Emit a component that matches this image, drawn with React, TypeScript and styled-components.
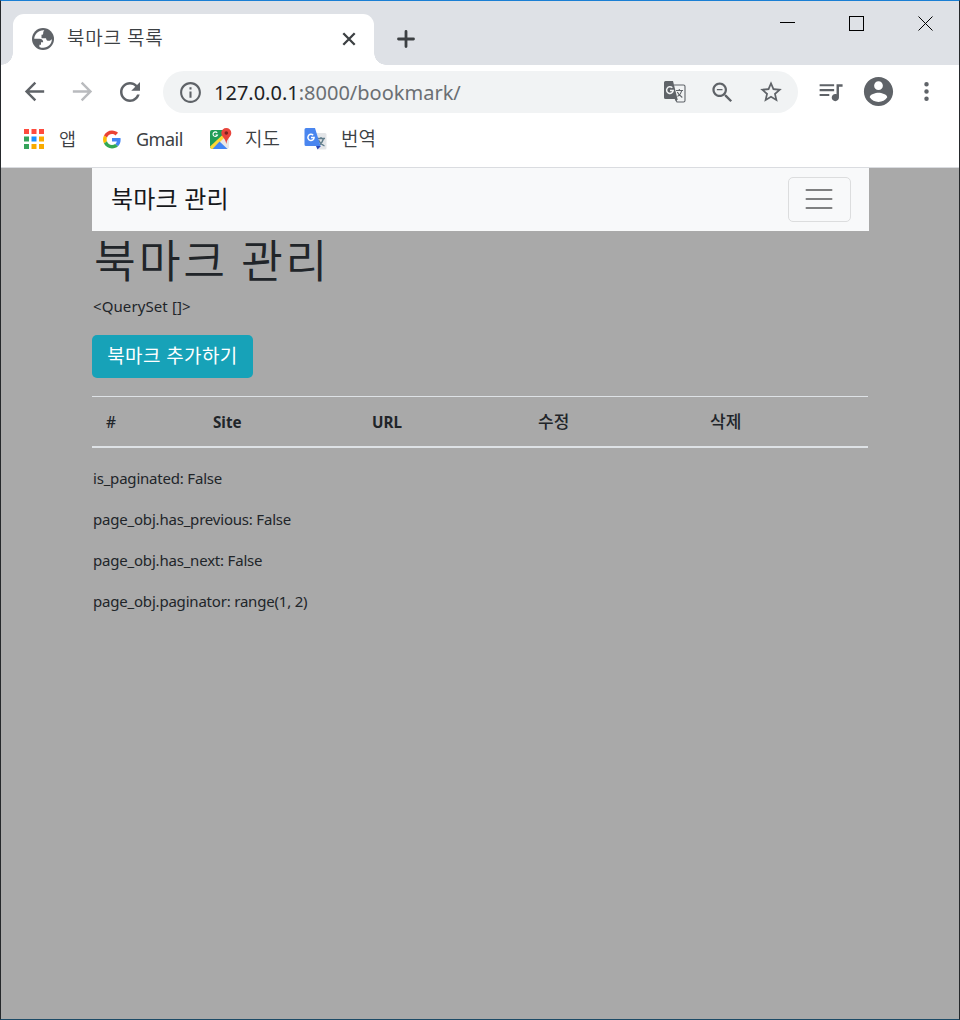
import React from 'react';
import styled, { createGlobalStyle } from 'styled-components';

const Global = createGlobalStyle`
  * { box-sizing: border-box; }
  body { margin: 0; font-family: "Noto Sans", "Noto Sans CJK KR", sans-serif; color: #212529; }
  button { font: inherit; }
`;

const Window = styled.div`
  width: 960px;
  height: 1020px;
  display: flex;
  flex-direction: column;
  border: 1px solid #25282b;
  border-top-color: #1a7fd4;
  border-bottom-color: #1c4a66;
  background: #a9a9a9;
  overflow: hidden;
`;

const TabStrip = styled.div`
  height: 64px;
  flex: none;
  display: flex;
  align-items: flex-end;
  background: #dee1e6;
`;

const TabEdge = styled.div<{ $side: 'left' | 'right' }>`
  width: 12px;
  height: 12px;
  background: radial-gradient(circle at ${p => (p.$side === 'left' ? '0 0' : '100% 0')}, #dee1e6 11.5px, #fff 12px);
`;

const Tab = styled.div`
  width: 361px;
  height: 51px;
  padding: 0 16px 2px 19px;
  display: flex;
  align-items: center;
  background: #fff;
  border-radius: 11px 11px 0 0;
`;

const Text = styled.span<{ $size: number; $gap?: number; $color?: string; $weight?: number }>`
  font-size: ${p => p.$size}px;
  letter-spacing: ${p => p.$gap ?? 0}px;
  color: ${p => p.$color ?? '#3c4043'};
  font-weight: ${p => p.$weight ?? 400};
  line-height: 28px;
  white-space: pre;
`;

const TabTitle = styled(Text)`
  flex: 1;
  margin-left: 13px;
  padding-bottom: 4px;
  font-family: "Noto Sans CJK KR", sans-serif;
`;

const NewTab = styled.div`
  width: 40px;
  height: 51px;
  padding-bottom: 2px;
  display: flex;
  align-items: center;
  justify-content: center;
`;

const Captions = styled.div`
  margin-left: auto;
  margin-right: -1px;
  align-self: flex-start;
  display: flex;
  height: 45px;
`;

const Caption = styled.div`
  width: 69px;
  display: flex;
  align-items: center;
  justify-content: center;
`;

const Toolbar = styled.div`
  height: 53px;
  flex: none;
  display: flex;
  align-items: center;
  padding-left: 9px;
  background: #fff;
`;

const ToolButton = styled.div`
  width: 48px;
  height: 48px;
  flex: none;
  display: flex;
  align-items: center;
  justify-content: center;
`;

const AddressBar = styled.div`
  width: 635px;
  height: 42px;
  margin: 1px 8px 0 9px;
  padding-left: 3px;
  padding-right: 3.5px;
  display: flex;
  align-items: center;
  background: #f1f3f4;
  border-radius: 21px;
`;

const Address = styled.div`
  flex: 1;
  display: flex;
  padding-top: 2px;
`;

const Bookmarks = styled.div`
  height: 50px;
  flex: none;
  display: flex;
  align-items: flex-start;
  padding: 6px 0 0 23px;
  background: #fff;
  border-bottom: 1px solid #dadce0;
`;

const Bookmark = styled.div<{ $width: number; $gap: number }>`
  width: ${p => p.$width}px;
  height: 30px;
  display: flex;
  align-items: center;
  gap: ${p => p.$gap}px;
`;

const Page = styled.main`
  width: 777px;
  margin-left: 91px;
`;

const Navbar = styled.nav`
  height: 63px;
  padding: 0 18px 0 19px;
  display: flex;
  align-items: center;
  justify-content: space-between;
  background: #f8f9fa;
`;

const Brand = styled(Text)`
  padding-bottom: 2px;
`;

const Toggler = styled.button`
  width: 63px;
  height: 45px;
  padding: 0 2px 1px 0;
  display: flex;
  align-items: center;
  justify-content: center;
  background: none;
  border: 1px solid #dcddde;
  border-radius: 5px;
`;

const Title = styled.h1`
  height: 63px;
  margin: 0;
  padding-left: 2px;
  font: 350 45.5px/54px "Noto Sans CJK KR", sans-serif;
  letter-spacing: 2.8px;
  white-space: nowrap;
`;

const Line = styled.p<{ $gap?: number }>`
  height: 25px;
  margin: 0 0 16px 1px;
  font-size: 15px;
  line-height: 25px;
  letter-spacing: ${p => p.$gap ?? -0.2}px;
`;

const AddButton = styled.button`
  width: 161px;
  height: 43px;
  margin: 0 0 18px;
  padding: 0 0 2px;
  display: block;
  color: #fff;
  background: #17a2b8;
  border: 0;
  border-radius: 5px;
  font-size: 19px;
  line-height: 28px;
  letter-spacing: 0.4px;
  white-space: nowrap;
`;

const Table = styled.table`
  width: 776px;
  height: 52px;
  margin-bottom: 18px;
  table-layout: fixed;
  border-spacing: 0;
  border-top: 1px solid #dee2e6;
  border-bottom: 2px solid #dee2e6;
`;

const Head = styled.th<{ $width: number; $weight: number; $size: number }>`
  width: ${p => p.$width}px;
  padding: 0 0 0 14px;
  text-align: left;
  font-size: ${p => p.$size}px;
  line-height: 24px;
  font-weight: ${p => p.$weight};
`;

interface GlyphProps { d: string; size: number; color?: string }
const Glyph = ({ d, size, color = '#5f6368' }: GlyphProps) => (
  <svg width={size} height={size} viewBox="0 0 24 24" fill={color}><path d={d} /></svg>
);

const icons = {
  back: 'M20 11H7.83l5.59-5.59L12 4l-8 8 8 8 1.41-1.41L7.83 13H20v-2z',
  forward: 'M12 4l-1.41 1.41L16.17 11H4v2h12.17l-5.58 5.59L12 20l8-8z',
  reload: 'M17.65 6.35C16.2 4.9 14.21 4 12 4c-4.42 0-7.99 3.58-7.99 8s3.57 8 7.99 8c3.73 0 6.84-2.55 7.73-6h-2.08c-.82 2.33-3.04 4-5.65 4-3.31 0-6-2.69-6-6s2.69-6 6-6c1.66 0 3.14.69 4.22 1.78L13 11h7V4l-2.35 2.35z',
  info: 'M11 7h2v2h-2zm0 4h2v6h-2zm1-9C6.48 2 2 6.48 2 12s4.48 10 10 10 10-4.48 10-10S17.52 2 12 2zm0 18c-4.41 0-8-3.59-8-8s3.59-8 8-8 8 3.59 8 8-3.59 8-8 8z',
  zoomOut: 'M15.5 14h-.79l-.28-.27C15.41 12.59 16 11.11 16 9.5 16 5.91 13.09 3 9.5 3S3 5.91 3 9.5 5.91 16 9.5 16c1.61 0 3.09-.59 4.23-1.57l.27.28v.79l5 4.99L20.49 19l-4.99-5zm-6 0C7.01 14 5 11.99 5 9.5S7.01 5 9.5 5 14 7.01 14 9.5 11.99 14 9.5 14zM7 8.9h5v1.200H7z',
  star: 'M22 9.24l-7.19-.62L12 2 9.19 8.63 2 9.24l5.46 4.73L5.82 21 12 17.27 18.18 21l-1.63-7.03L22 9.24zM12 15.4l-3.76 2.27 1-4.28-3.32-2.88 4.38-.38L12 6.1l1.71 4.04 4.38.38-3.32 2.88 1 4.28L12 15.4z',
  queue: 'M15 6H3v1.7h12V6zm0 4H3v1.7h12V10zM3 15.7h8V14H3v1.7zM17 6v8.18c-.31-.11-.65-.18-1-.18-1.66 0-3 1.34-3 3s1.34 3 3 3 3-1.34 3-3V8h3V6h-5z',
  account: 'M12 2C6.48 2 2 6.48 2 12s4.48 10 10 10 10-4.48 10-10S17.52 2 12 2zm0 3c1.66 0 3 1.34 3 3s-1.34 3-3 3-3-1.34-3-3 1.34-3 3-3zm0 14.2c-2.5 0-4.71-1.28-6-3.22.03-1.99 4-3.08 6-3.08 1.99 0 5.97 1.09 6 3.08-1.29 1.94-3.5 3.22-6 3.22z',
  more: 'M12 3.5a2 2 0 1 0 0 4 2 2 0 0 0 0-4zm0 6.5a2 2 0 1 0 0 4 2 2 0 0 0 0-4zm0 6.5a2 2 0 1 0 0 4 2 2 0 0 0 0-4z',
};

const Globe = () => (
  <svg width="22" height="22" viewBox="0 0 22 22">
    <circle cx="11" cy="11" r="11" fill="#5f6368" />
    <path d="M12.300 2.300C7 1.800 2.600 5.600 2.200 10.800H7.500c2.400 0 3.700 1.300 3.700 3.400H9v2.600H7.400v2.200c6 2.700 12.600-1.500 12.500-8.200-.6 1.400-1.700 2-3.200 2-1.700 0-2.500-.9-2.700-2.600H9.500V6.800c1.200 0 1.700-.5 1.700-1.500 0-1.300.3-2.100 1.100-3z" fill="#fff" />
  </svg>
);

const GoogleLogo = () => (
  <svg width="18" height="19" viewBox="0 0 48 48">
    <path fill="#EA4335" d="M24 9.500c3.540 0 6.710 1.220 9.210 3.600l6.850-6.850C35.900 2.380 30.470 0 24 0 14.620 0 6.510 5.380 2.560 13.220l7.980 6.190C12.430 13.720 17.740 9.500 24 9.500z" />
    <path fill="#4285F4" d="M46.980 24.550c0-1.570-.15-3.090-.38-4.550H24v9.020h12.940c-.58 2.960-2.260 5.480-4.780 7.180l7.730 6c4.510-4.180 7.090-10.360 7.090-17.650z" />
    <path fill="#FBBC05" d="M10.530 28.590c-.48-1.450-.76-2.990-.76-4.590s.27-3.140.76-4.590l-7.980-6.190C.92 16.460 0 20.120 0 24s.92 7.540 2.560 10.780l7.970-6.190z" />
    <path fill="#34A853" d="M24 48c6.480 0 11.930-2.130 15.890-5.810l-7.730-6c-2.150 1.450-4.920 2.300-8.160 2.300-6.260 0-11.570-4.220-13.470-9.910l-7.980 6.190C6.510 42.620 14.620 48 24 48z" />
  </svg>
);

const appColors = ['#ff4b3e', '#ff4b3e', '#ff4b3e', '#34a35a', '#1a90ff', '#f9ab00', '#34a35a', '#f9ab00', '#f9ab00'];
const Apps = () => (
  <svg width="20" height="20" viewBox="0 0 20 20">
    {appColors.map((c, i) => <rect key={i} x={(i % 3) * 7.500} y={Math.floor(i / 3) * 7.500} width="5" height="5" fill={c} />)}
  </svg>
);

const Maps = () => (
  <svg width="24" height="24" viewBox="0 0 24 24">
    <path d="M3 3h15l2 2v15.500L18.500 22H3a2 2 0 0 1-2-2V5a2 2 0 0 1 2-2z" fill="#e8e8e8" />
    <path d="M3 3h12l2 5L2 21.500 1 20V5a2 2 0 0 1 2-2z" fill="#1f9d57" />
    <path d="M1 19.500L14.500 7l2 2.500L4 22H2z" fill="#fdd835" />
    <path d="M3.500 22l7-7.500L18.500 22z" fill="#4285f4" />
    <path d="M8.200 5.800a2.300 2.300 0 1 0 .3 2.200H6.500" fill="none" stroke="#fff" strokeWidth="1.100" />
    <path d="M17.300 1a5 5 0 0 0-5 5c0 4 4 4.500 5 11 1-6.500 5-7 5-11a5 5 0 0 0-5-5z" fill="#e8453c" />
    <circle cx="17.300" cy="6" r="1.800" fill="#7b231e" />
  </svg>
);

const Translate = () => (
  <svg width="24" height="24" viewBox="0 0 24 24">
    <path d="M10 6h11a1.500 1.500 0 0 1 1.500 1.500V21a1.500 1.500 0 0 1-1.500 1.500h-7z" fill="#e3e5e8" />
    <path d="M13 11.500h8M17 10v1.500M19.500 11.500c-.7 3-2.700 5.500-5 7M14.500 13c1 2.500 3.500 4.800 6 6" fill="none" stroke="#607d8b" strokeWidth="1.300" />
    <path d="M12 19h5l-3.500 3.500z" fill="#2a48b8" />
    <path d="M2 1h9l5.500 18H2a1.500 1.500 0 0 1-1.500-1.500v-15A1.500 1.500 0 0 1 2 1z" fill="#4a86ef" />
    <path d="M9.200 8.200a3.100 3.100 0 1 0 .9 2.300H7" fill="none" stroke="#fff" strokeWidth="1.500" />
  </svg>
);

const TranslateMono = () => (
  <svg width="22" height="22" viewBox="0 0 22 22">
    <path d="M10 4h9.500A1.500 1.500 0 0 1 21 5.500v14a1.500 1.500 0 0 1-1.500 1.500H13l-2-3.500" fill="none" stroke="#5f6368" strokeWidth="1.100" />
    <path d="M12 9.500h7M15.300 8v1.500M17.800 9.500c-.5 2.500-2 4.500-4.300 6M13.300 11c1 2 3 4 5 5.500" fill="none" stroke="#5f6368" strokeWidth="1.100" />
    <path d="M1.500 0H9l4.500 18h-12A1.500 1.500 0 0 1 0 16.500v-15A1.500 1.500 0 0 1 1.500 0z" fill="#5f6368" />
    <path d="M8.300 6.800a3.300 3.300 0 1 0 .9 2.600H6" fill="none" stroke="#f1f3f4" strokeWidth="1.500" />
    <path d="M11 18h3l-2 2.500z" fill="#5f6368" />
  </svg>
);

const columns = [
  { label: '#', width: 107, weight: 500, size: 15.5 },
  { label: 'Site', width: 159, weight: 700, size: 15.2 },
  { label: 'URL', width: 166, weight: 700, size: 15.2 },
  { label: '수정', width: 172, weight: 500, size: 17 },
  { label: '삭제', width: 172, weight: 500, size: 17 },
];

export default function App() {
  return (
    <Window>
      <Global />
      <TabStrip>
        <TabEdge $side="left" />
        <Tab>
          <Globe />
          <TabTitle $size={19} $gap={0.8} $weight={350}>북마크 목록</TabTitle>
          <svg width="18" height="18" viewBox="0 0 18 18" stroke="#3c4043" strokeWidth="2.3"><path d="M3.300 3.300l11.400 11.400M14.700 3.300L3.300 14.700" /></svg>
        </Tab>
        <TabEdge $side="right" />
        <NewTab>
          <svg width="18" height="18" viewBox="0 0 18 18" stroke="#3c4043" strokeWidth="2.800" strokeLinecap="round"><path d="M9 1.500v15M1.500 9h15" /></svg>
        </NewTab>
        <Captions>
          <Caption><svg width="15" height="15" fill="#000"><rect y="6" width="15" height="1" /></svg></Caption>
          <Caption><svg width="15" height="15" fill="none" stroke="#000"><rect x=".5" y=".5" width="14" height="14" /></svg></Caption>
          <Caption><svg width="15" height="15" fill="none" stroke="#000"><path d="M.5.5l14 14M14.500.5l-14 14" /></svg></Caption>
        </Captions>
      </TabStrip>
      <Toolbar>
        <ToolButton><Glyph d={icons.back} size={29} /></ToolButton>
        <ToolButton><Glyph d={icons.forward} size={29} color="#b9bbbe" /></ToolButton>
        <ToolButton><Glyph d={icons.reload} size={30} /></ToolButton>
        <AddressBar>
          <ToolButton><Glyph d={icons.info} size={25} /></ToolButton>
          <Address>
            <Text $size={20} $color="#202124">127.0.0.1</Text>
            <Text $size={20} $color="#6b6f73">:8000/bookmark/</Text>
          </Address>
          <ToolButton><TranslateMono /></ToolButton>
          <ToolButton><Glyph d={icons.zoomOut} size={27} /></ToolButton>
          <ToolButton><Glyph d={icons.star} size={26} /></ToolButton>
        </AddressBar>
        <ToolButton><Glyph d={icons.queue} size={29} /></ToolButton>
        <ToolButton><Glyph d={icons.account} size={35} /></ToolButton>
        <ToolButton><Glyph d={icons.more} size={27} /></ToolButton>
      </Toolbar>
      <Bookmarks>
        <Bookmark $width={79} $gap={15}><Apps /><Text $size={18.5} $weight={350}>앱</Text></Bookmark>
        <Bookmark $width={106} $gap={15}><GoogleLogo /><Text $size={18} $gap={-0.5}>Gmail</Text></Bookmark>
        <Bookmark $width={95} $gap={12}><Maps /><Text $size={19} $weight={350}>지도</Text></Bookmark>
        <Bookmark $width={90} $gap={13}><Translate /><Text $size={19} $weight={350}>번역</Text></Bookmark>
      </Bookmarks>
      <Page>
        <Navbar>
          <Brand $size={24} $gap={0.2} $color="#16181b">북마크 관리</Brand>
          <Toggler aria-label="menu">
            <svg width="28" height="22" stroke="#7f8081" strokeWidth="2" strokeLinecap="round"><path d="M1.500 2h25M1.500 11h25M1.500 20h25" /></svg>
          </Toggler>
        </Navbar>
        <Title>북마크 관리</Title>
        <Line $gap={0.1}>&lt;QuerySet []&gt;</Line>
        <AddButton>북마크 추가하기</AddButton>
        <Table>
          <thead>
            <tr>{columns.map(c => <Head key={c.label} $width={c.width} $weight={c.weight} $size={c.size}>{c.label}</Head>)}</tr>
          </thead>
        </Table>
        <Line>is_paginated: False</Line>
        <Line>page_obj.has_previous: False</Line>
        <Line>page_obj.has_next: False</Line>
        <Line>page_obj.paginator: range(1, 2)</Line>
      </Page>
    </Window>
  );
}
